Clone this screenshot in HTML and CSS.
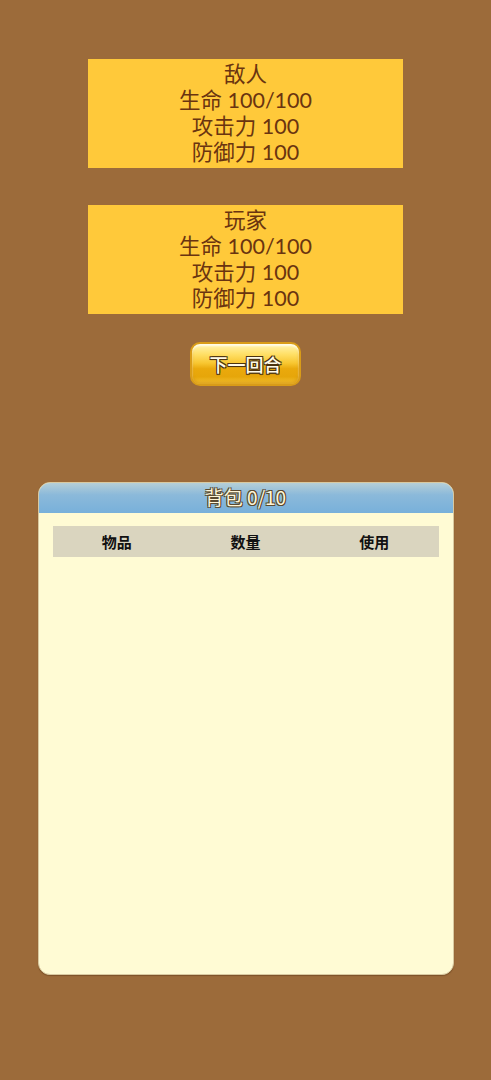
FILE: index.html
```html
<!DOCTYPE html>
<html lang="zh">
<head>
<meta charset="utf-8">
<link rel="stylesheet" href="styles.css">
</head>
<body>
<div class="page">
  <div class="stat-box">
    <div>敌人</div>
    <div>生命 100/100</div>
    <div>攻击力 100</div>
    <div>防御力 100</div>
  </div>
  <div class="stat-box">
    <div>玩家</div>
    <div>生命 100/100</div>
    <div>攻击力 100</div>
    <div>防御力 100</div>
  </div>
  <button class="next-btn"><span>下一回合</span></button>
  <div class="bag">
    <div class="bag-title">背包 0/10</div>
    <div class="bag-body">
      <div class="bag-head">
        <div>物品</div>
        <div>数量</div>
        <div>使用</div>
      </div>
    </div>
  </div>
</div>
</body>
</html>
```
FILE: styles.css
```css
html, body {
  margin: 0;
  padding: 0;
  background: #9c6b3a;
}
body {
  font-family: "Lato", "Noto Sans CJK SC", sans-serif;
}
.page {
  display: flex;
  flex-direction: column;
  align-items: center;
  padding-top: 59px;
  height: 1080px;
  box-sizing: border-box;
}
.stat-box {
  width: 315px;
  height: 109px;
  background: #ffc93a;
  color: #6a3410;
  font-size: 21.5px;
  line-height: 26px;
  text-align: center;
  padding-top: 2px;
  box-sizing: border-box;
  margin-bottom: 37px;
}
.next-btn {
  width: 111px;
  height: 44px;
  margin-top: -9px;
  border: 2px solid #d99c18;
  border-radius: 10px;
  background: linear-gradient(to bottom, #fff4b0 0%, #ffe068 25%, #f8c630 48%, #eaa90c 62%, #e6a60a 82%, #f5c434 100%);
  box-shadow: inset 0 2px 2px rgba(255,255,255,0.75), inset 0 -2px 3px rgba(180,110,0,0.35);
  font-family: "Noto Sans CJK SC", sans-serif;
  font-size: 18px;
  font-weight: 500;
  color: #fffbe8;
  padding: 0;
  text-shadow: -1px -1px 0 #4a3310, 1px -1px 0 #4a3310, -1px 1px 0 #4a3310, 1px 1px 0 #4a3310, 0 1px 1px #4a3310;
}
.bag {
  margin-top: 96px;
  width: 416px;
  height: 493px;
  border-radius: 12px;
  background: #fffbd4;
  border: 1px solid #d9c9a0;
  box-sizing: border-box;
  overflow: hidden;
  box-shadow: 0 1px 1px #7d5228;
  display: flex;
  flex-direction: column;
}
.bag-title {
  height: 30px;
  background: linear-gradient(to bottom, #b5cfd8 0%, #8bb9da 40%, #78b0da 100%);
  text-align: center;
  font-family: "Noto Sans CJK SC", sans-serif;
  font-size: 19px;
  line-height: 28px;
  color: #fff6d8;
  text-shadow: -1px -1px 0 #5a4a30, 1px -1px 0 #5a4a30, -1px 1px 0 #5a4a30, 1px 1px 0 #5a4a30;
}
.bag-body {
  padding: 13px 14px;
}
.bag-head {
  display: grid;
  grid-template-columns: 1fr 1fr 1fr;
  height: 31px;
  align-items: center;
  background: #dad5bf;
  font-family: "Noto Sans CJK SC", sans-serif;
  font-weight: bold;
  font-size: 15px;
  color: #111;
  text-align: center;
}
```
